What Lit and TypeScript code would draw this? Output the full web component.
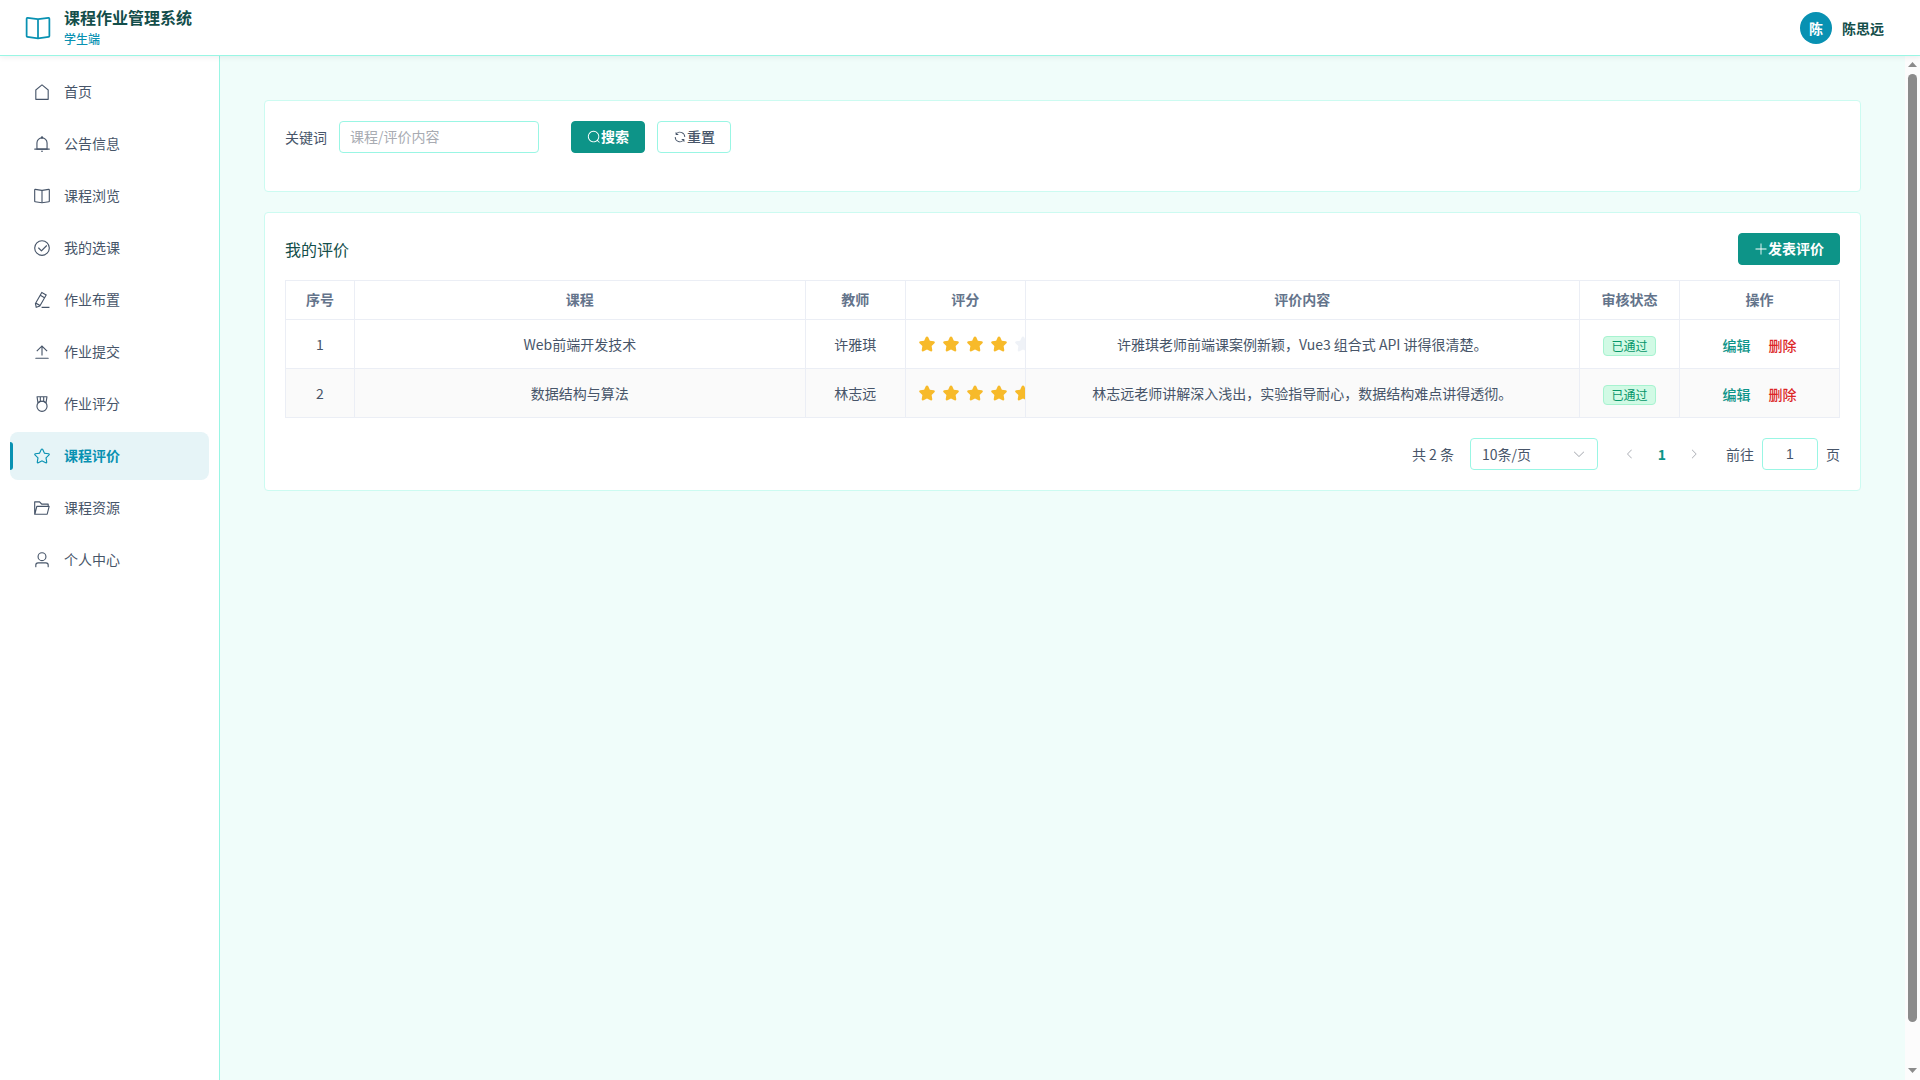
import { LitElement, html, css, svg } from "lit";
import { customElement, property, state } from "lit/decorators.js";
import { classMap } from "lit/directives/class-map.js";

const STAR_OUTLINE =
  "M313.6 924.48a70.4 70.4 0 0 1-102.144-74.24l37.888-220.928L88.96 472.96A70.4 70.4 0 0 1 128 352.896l221.76-32.256 99.2-200.96a70.4 70.4 0 0 1 126.208 0l99.2 200.96 221.824 32.256a70.4 70.4 0 0 1 39.04 120.064L774.72 629.376l37.888 220.928a70.4 70.4 0 0 1-102.144 74.24L512 820.096l-198.4 104.32z";

const ICONS: Record<string, string[]> = {
  home: [
    "M192 413.952V896h640V413.952L512 147.328zM139.52 374.4l352-293.312a32 32 0 0 1 40.96 0l352 293.312A32 32 0 0 1 896 398.976V928a32 32 0 0 1-32 32H160a32 32 0 0 1-32-32V398.976a32 32 0 0 1 11.52-24.576",
  ],
  bell: [
    "M512 64a64 64 0 0 1 64 64v64H448v-64a64 64 0 0 1 64-64",
    "M256 768h512V448a256 256 0 1 0-512 0zm256-640a320 320 0 0 1 320 320v384H192V448a320 320 0 0 1 320-320",
    "M96 768h832q32 0 32 32t-32 32H96q-32 0-32-32t32-32m352 128h128a64 64 0 0 1-128 0",
  ],
  book: [
    "m512 863.36 384-54.848v-638.72L525.568 222.72a96 96 0 0 1-27.136 0L128 169.792v638.72zM137.024 106.432l370.432 52.928a32 32 0 0 0 9.088 0l370.432-52.928A64 64 0 0 1 960 169.792v638.72a64 64 0 0 1-54.976 63.36l-388.48 55.488a32 32 0 0 1-9.088 0l-388.48-55.488A64 64 0 0 1 64 808.512v-638.72a64 64 0 0 1 73.024-63.36",
    "M480 192h64v704h-64z",
  ],
  check: [
    "M512 896a384 384 0 1 0 0-768 384 384 0 0 0 0 768m0 64a448 448 0 1 1 0-896 448 448 0 0 1 0 896",
    "M745.344 361.344a32 32 0 0 1 45.312 45.312l-288 288a32 32 0 0 1-45.312 0l-160-160a32 32 0 1 1 45.312-45.312L480 626.752z",
  ],
  pen: [
    "m199.04 672.64 193.984 112 224-387.968-193.92-112-224 388.032zm-23.872 60.16 32.896 148.288 144.896-45.696zM455.04 229.248l193.92 112 56.704-98.112-193.984-112zM104.32 708.8l384-665.024 304.768 175.936L409.152 884.8h.064l-248.448 78.336zm384 254.272v-64h448v64z",
  ],
  upload: [
    "M160 832h704a32 32 0 1 1 0 64H160a32 32 0 1 1 0-64m384-578.304V704h-64V247.296L237.248 490.048 192 444.8 508.8 128l316.8 316.8-45.312 45.248z",
  ],
  medal: [
    "M512 896a256 256 0 1 0 0-512 256 256 0 0 0 0 512m0 64a320 320 0 1 1 0-640 320 320 0 0 1 0 640",
    "M576 128H448v200a286.7 286.7 0 0 1 64-8c19.52 0 40.832 2.688 64 8zm64 0v219.648c24.448 9.088 50.56 20.416 78.4 33.92L757.44 128zm-256 0H266.624l39.04 253.568c27.84-13.504 53.888-24.832 78.336-33.92zM229.312 64h565.376a32 32 0 0 1 31.616 36.864L768 480c-113.792-64-199.104-96-256-96s-142.208 32-256 96l-58.304-379.136A32 32 0 0 1 229.312 64",
  ],
  star: [
    "m512 747.84 228.16 119.936a6.4 6.4 0 0 0 9.28-6.72l-43.52-254.08 184.512-179.904a6.4 6.4 0 0 0-3.52-10.88l-255.104-37.12L517.76 147.904a6.4 6.4 0 0 0-11.52 0L392.192 379.072l-255.104 37.12a6.4 6.4 0 0 0-3.52 10.88L318.08 606.976l-43.584 254.08a6.4 6.4 0 0 0 9.28 6.72z" +
      STAR_OUTLINE,
  ],
  starFilled: [STAR_OUTLINE],
  folder: [
    "M878.08 448H241.92l-96 384h636.16zM832 384v-64H485.76L357.504 192H128v448l57.92-231.744A32 32 0 0 1 216.96 384zm-24.96 512H96a32 32 0 0 1-32-32V160a32 32 0 0 1 32-32h287.872l128.384 128H864a32 32 0 0 1 32 32v96h23.04a32 32 0 0 1 31.04 39.744l-112 448A32 32 0 0 1 807.04 896",
  ],
  user: [
    "M512 512a192 192 0 1 0 0-384 192 192 0 0 0 0 384m0 64a256 256 0 1 1 0-512 256 256 0 0 1 0 512m320 320v-96a96 96 0 0 0-96-96H288a96 96 0 0 0-96 96v96a32 32 0 1 1-64 0v-96a160 160 0 0 1 160-160h448a160 160 0 0 1 160 160v96a32 32 0 1 1-64 0",
  ],
  search: [
    "m795.904 750.72 124.992 124.928a32 32 0 0 1-45.248 45.248L750.656 795.904a416 416 0 1 1 45.248-45.248zM480 832a352 352 0 1 0 0-704 352 352 0 0 0 0 704",
  ],
  refresh: [
    "M771.776 794.88A384 384 0 0 1 128 512h64a320 320 0 0 0 555.712 216.448H654.72a32 32 0 1 1 0-64h149.056a32 32 0 0 1 32 32v148.928a32 32 0 1 1-64 0v-50.56zM276.288 295.616h92.992a32 32 0 0 1 0 64H220.16a32 32 0 0 1-32-32V178.56a32 32 0 0 1 64 0v50.56A384 384 0 0 1 896.128 512h-64a320 320 0 0 0-555.776-216.384z",
  ],
  plus: [
    "M480 480V128a32 32 0 0 1 64 0v352h352a32 32 0 1 1 0 64H544v352a32 32 0 1 1-64 0V544H128a32 32 0 0 1 0-64z",
  ],
  down: [
    "M831.872 340.864 512 652.672 192.128 340.864a30.59 30.59 0 0 0-42.752 0 29.12 29.12 0 0 0 0 41.6L489.664 714.24a32 32 0 0 0 44.672 0l340.288-331.712a29.12 29.12 0 0 0 0-41.728 30.59 30.59 0 0 0-42.752 0z",
  ],
  left: [
    "M609.408 149.376 277.76 489.6a32 32 0 0 0 0 44.672l331.648 340.352a29.12 29.12 0 0 0 41.728 0 30.59 30.59 0 0 0 0-42.752L339.264 511.936l311.872-319.872a30.59 30.59 0 0 0 0-42.688 29.12 29.12 0 0 0-41.728 0z",
  ],
  right: [
    "M340.864 149.312a30.59 30.59 0 0 0 0 42.752L652.736 512 340.864 831.872a30.59 30.59 0 0 0 0 42.752 29.12 29.12 0 0 0 41.728 0L714.24 534.336a32 32 0 0 0 0-44.672L382.592 149.376a29.12 29.12 0 0 0-41.728 0z",
  ],
};

@customElement("ui-icon")
class UiIcon extends LitElement {
  @property() name = "";

  static styles = css`
    :host {
      display: inline-flex;
      flex: none;
      width: 1em;
      height: 1em;
    }
    .glyph {
      display: block;
      width: 100%;
      height: 100%;
      fill: currentColor;
    }
  `;

  render() {
    return html`<svg class="glyph" viewBox="0 0 1024 1024" aria-hidden="true">
      ${(ICONS[this.name] ?? []).map((d) => svg`<path d=${d}></path>`)}
    </svg>`;
  }
}

interface Review {
  course: string;
  teacher: string;
  score: number;
  content: string;
  status: string;
}

const MENU = [
  { icon: "home", label: "首页" },
  { icon: "bell", label: "公告信息" },
  { icon: "book", label: "课程浏览" },
  { icon: "check", label: "我的选课" },
  { icon: "pen", label: "作业布置" },
  { icon: "upload", label: "作业提交" },
  { icon: "medal", label: "作业评分" },
  { icon: "star", label: "课程评价" },
  { icon: "folder", label: "课程资源" },
  { icon: "user", label: "个人中心" },
];

const REVIEWS: Review[] = [
  {
    course: "Web前端开发技术",
    teacher: "许雅琪",
    score: 4,
    content: "许雅琪老师前端课案例新颖，Vue3 组合式 API 讲得很清楚。",
    status: "已通过",
  },
  {
    course: "数据结构与算法",
    teacher: "林志远",
    score: 5,
    content: "林志远老师讲解深入浅出，实验指导耐心，数据结构难点讲得透彻。",
    status: "已通过",
  },
];

@customElement("app-root")
class AppRoot extends LitElement {
  @state() private active = 7;

  static styles = css`
    :host {
      display: flex;
      flex-direction: column;
      height: 100vh;
      font-family: "Noto Sans CJK SC", "Noto Sans", sans-serif;
      font-size: 14px;
      line-height: 20px;
      color: #475569;
      background: #f0fdfa;
    }
    *,
    *::before {
      box-sizing: border-box;
    }
    button,
    input,
    select {
      margin: 0;
      font: inherit;
      color: inherit;
    }
    button {
      cursor: pointer;
    }

    .header {
      display: flex;
      align-items: center;
      justify-content: space-between;
      flex: none;
      height: 56px;
      padding: 0 36px 0 24px;
      background: #fff;
      border-bottom: 1px solid #99f6e4;
      box-shadow: 0 1px 6px rgba(15, 23, 42, 0.08);
      z-index: 1;
    }
    .brand {
      display: flex;
      align-items: center;
      gap: 12px;
    }
    .brand-icon {
      font-size: 28px;
      color: #0891b2;
    }
    .brand-text {
      display: grid;
      gap: 2px;
    }
    .brand-title {
      margin: 0;
      font-size: 16px;
      font-weight: 700;
      color: #134e4a;
    }
    .brand-role {
      font-size: 12px;
      font-weight: 500;
      color: #0891b2;
      margin: 0;
    }
    .account {
      display: flex;
      align-items: center;
      gap: 10px;
      padding: 0;
      border: 0;
      background: none;
      font-weight: 600;
      color: #134e4a;
    }
    .avatar {
      display: grid;
      place-items: center;
      width: 32px;
      height: 32px;
      border-radius: 50%;
      background: #0891b2;
      color: #fff;
    }

    .body {
      display: flex;
      flex: 1;
      min-height: 0;
    }
    .sidebar {
      flex: none;
      width: 220px;
      padding: 12px 10px;
      background: #fff;
      border-right: 1px solid #99f6e4;
      overflow: auto;
    }
    .menu {
      display: flex;
      flex-direction: column;
      gap: 4px;
      margin: 0;
      padding: 0;
      list-style: none;
    }
    .menu-link {
      position: relative;
      display: flex;
      align-items: center;
      gap: 13px;
      height: 48px;
      padding: 0 23px;
      border-radius: 8px;
      color: #475569;
      text-decoration: none;
    }
    .menu-icon {
      font-size: 18px;
    }
    .menu-label,
    .btn-label {
      padding-bottom: 2px;
    }
    .menu-link.active {
      background: #e6f4f7;
      color: #0891b2;
      font-weight: 600;
    }
    .menu-link.active::before {
      content: "";
      position: absolute;
      left: 0;
      top: 10px;
      bottom: 10px;
      width: 3px;
      border-radius: 0 3px 3px 0;
      background: #0891b2;
    }

    .main {
      flex: 1;
      min-width: 0;
      overflow-x: hidden;
      overflow-y: auto;
      scrollbar-width: none;
      padding: 44px;
    }
    .scrollbar {
      display: flex;
      flex-direction: column;
      gap: 7px;
      flex: none;
      width: 15px;
      padding: 6px 3px 7px;
      background: #fcfcfc;
    }
    .scroll-arrow {
      flex: none;
      height: 5px;
      background: #8b8b8b;
      clip-path: polygon(50% 0, 100% 100%, 0 100%);
    }
    .scroll-arrow.end {
      clip-path: polygon(0 0, 100% 0, 50% 100%);
    }
    .scroll-track {
      flex: 1;
    }
    .scroll-thumb {
      height: 96%;
      border-radius: 5px;
      background: #8b8b8b;
    }
    .page {
      display: flex;
      flex-direction: column;
      gap: 20px;
      min-height: calc(100vh - 144px);
    }
    .card {
      padding: 20px;
      background: #fff;
      border: 1px solid #ccfbf1;
      border-radius: 4px;
    }

    .filters {
      display: flex;
      gap: 32px;
      padding-bottom: 38px;
    }
    .field {
      display: flex;
      align-items: center;
      gap: 12px;
    }
    .box {
      height: 32px;
      padding: 0 11px;
      border: 1px solid #99f6e4;
      border-radius: 4px;
      background: #fff;
      outline: none;
    }
    .box::placeholder {
      color: #a8abb2;
      opacity: 1;
    }
    .keyword {
      width: 200px;
      padding: 0 10px 2px;
    }
    .buttons {
      display: flex;
      gap: 12px;
    }
    .btn {
      display: inline-flex;
      align-items: center;
      justify-content: center;
      height: 32px;
      padding: 0 15px;
      border: 1px solid #99f6e4;
      border-radius: 4px;
      background: #fff;
      font-weight: 500;
    }
    .btn.primary {
      border-color: #0d9488;
      background: #0d9488;
      color: #fff;
      font-weight: 600;
    }

    .card-head {
      display: flex;
      align-items: center;
      justify-content: space-between;
      margin-bottom: 15px;
    }
    .card-title {
      margin: 0;
      font-size: 16px;
      font-weight: 400;
      color: #134e4a;
    }

    .table {
      width: 100%;
      table-layout: fixed;
      border-collapse: separate;
      border-spacing: 0;
      border-top: 1px solid #ebeef5;
      border-left: 1px solid #ebeef5;
    }
    .col-index {
      width: 69px;
    }
    .col-course {
      width: 29%;
    }
    .col-small {
      width: 100px;
    }
    .col-score {
      width: 120px;
    }
    .col-actions {
      width: 160px;
    }
    .cell {
      height: 49px;
      padding: 0 12px;
      border-right: 1px solid #ebeef5;
      border-bottom: 1px solid #ebeef5;
      text-align: center;
      font-weight: 400;
    }
    .cell.head {
      height: 39px;
      padding-bottom: 2px;
      font-weight: 600;
      color: #64748b;
    }
    .cell.score {
      padding-right: 0;
    }
    .row:nth-child(even) {
      background: #fafafa;
    }
    .stars {
      display: flex;
      gap: 6px;
      overflow: hidden;
      font-size: 18px;
      color: #eff2f7;
    }
    .star-on {
      color: #f7ba2a;
    }
    .tag {
      display: inline-block;
      height: 20px;
      padding: 0 7px;
      border: 1px solid #a7f3d0;
      border-radius: 4px;
      background: #d1fae5;
      color: #059669;
      font-size: 12px;
      line-height: 18px;
    }
    .cell.status {
      padding-top: 2px;
    }
    .actions {
      display: flex;
      justify-content: center;
      gap: 18px;
    }
    .link {
      padding: 2px 0 0;
      border: 0;
      background: none;
      font-weight: 500;
      color: #0d9488;
    }
    .link.danger {
      color: #dc2626;
    }

    .pager {
      display: flex;
      align-items: center;
      justify-content: flex-end;
      gap: 16px;
      margin-top: 20px;
    }
    .size {
      display: grid;
      align-items: center;
      width: 128px;
    }
    .size-select,
    .size-arrow {
      grid-area: 1 / 1;
    }
    .size-select {
      appearance: none;
      width: 100%;
    }
    .size-arrow {
      justify-self: end;
      margin-right: 12px;
      color: #a8abb2;
      pointer-events: none;
    }
    .pages {
      display: flex;
    }
    .page-btn {
      display: grid;
      place-items: center;
      width: 32px;
      height: 32px;
      padding: 0;
      border: 0;
      background: none;
    }
    .page-btn:disabled {
      color: #a8abb2;
    }
    .page-arrow {
      font-size: 12px;
    }
    .page-btn.current {
      color: #0d9488;
      font-weight: 700;
    }
    .jump {
      display: flex;
      align-items: center;
      gap: 8px;
    }
    .jump-input {
      width: 56px;
      font-family: "Liberation Sans", sans-serif;
      text-align: center;
    }
  `;

  private stars(score: number) {
    return html`<div class="stars" role="img" aria-label="${score} / 5">
      ${[1, 2, 3, 4, 5].map(
        (n) =>
          html`<ui-icon name="starFilled" class=${classMap({ "star-on": n <= score })}></ui-icon>`,
      )}
    </div>`;
  }

  private onSelect(e: Event, i: number) {
    e.preventDefault();
    this.active = i;
  }

  render() {
    return html`
      <header class="header">
        <div class="brand">
          <ui-icon class="brand-icon" name="book"></ui-icon>
          <div class="brand-text">
            <h1 class="brand-title">课程作业管理系统</h1>
            <p class="brand-role">学生端</p>
          </div>
        </div>
        <button class="account" type="button">
          <span class="avatar">陈</span>
          <span>陈思远</span>
        </button>
      </header>
      <div class="body">
        <nav class="sidebar">
          <ul class="menu">
            ${MENU.map(
              (m, i) => html`<li>
                <a
                  class=${classMap({ "menu-link": true, active: i === this.active })}
                  href="#"
                  @click=${(e: Event) => this.onSelect(e, i)}
                  ><ui-icon class="menu-icon" name=${m.icon}></ui-icon
                  ><span class="menu-label">${m.label}</span></a
                >
              </li>`,
            )}
          </ul>
        </nav>
        <main class="main">
          <div class="page">
            <form class="card filters" @submit=${(e: Event) => e.preventDefault()}>
              <div class="field">
                <label for="keyword">关键词</label>
                <input class="box keyword" id="keyword" type="text" placeholder="课程/评价内容" />
              </div>
              <div class="buttons">
                <button class="btn primary" type="submit">
                  <ui-icon name="search"></ui-icon><span class="btn-label">搜索</span>
                </button>
                <button class="btn" type="reset">
                  <ui-icon name="refresh"></ui-icon><span class="btn-label">重置</span>
                </button>
              </div>
            </form>
            <section class="card">
              <div class="card-head">
                <h2 class="card-title">我的评价</h2>
                <button class="btn primary" type="button">
                  <ui-icon name="plus"></ui-icon><span class="btn-label">发表评价</span>
                </button>
              </div>
              <table class="table">
                <colgroup>
                  <col class="col-index" />
                  <col class="col-course" />
                  <col class="col-small" />
                  <col class="col-score" />
                  <col />
                  <col class="col-small" />
                  <col class="col-actions" />
                </colgroup>
                <thead>
                  <tr>
                    ${["序号", "课程", "教师", "评分", "评价内容", "审核状态", "操作"].map(
                      (t) => html`<th class="cell head" scope="col">${t}</th>`,
                    )}
                  </tr>
                </thead>
                <tbody>
                  ${REVIEWS.map(
                    (r, i) => html`<tr class="row">
                      <td class="cell">${i + 1}</td>
                      <td class="cell">${r.course}</td>
                      <td class="cell">${r.teacher}</td>
                      <td class="cell score">${this.stars(r.score)}</td>
                      <td class="cell">${r.content}</td>
                      <td class="cell status"><span class="tag">${r.status}</span></td>
                      <td class="cell">
                        <div class="actions">
                          <button class="link" type="button">编辑</button>
                          <button class="link danger" type="button">删除</button>
                        </div>
                      </td>
                    </tr>`,
                  )}
                </tbody>
              </table>
              <div class="pager">
                <span>共 ${REVIEWS.length} 条</span>
                <div class="size">
                  <select class="box size-select" aria-label="每页条数">
                    <option>10条/页</option>
                    <option>20条/页</option>
                    <option>50条/页</option>
                  </select>
                  <ui-icon class="size-arrow" name="down"></ui-icon>
                </div>
                <div class="pages">
                  <button class="page-btn" type="button" aria-label="上一页" disabled>
                    <ui-icon class="page-arrow" name="left"></ui-icon>
                  </button>
                  <button class="page-btn current" type="button">1</button>
                  <button class="page-btn" type="button" aria-label="下一页" disabled>
                    <ui-icon class="page-arrow" name="right"></ui-icon>
                  </button>
                </div>
                <div class="jump">
                  <label for="jump">前往</label>
                  <input class="box jump-input" id="jump" type="text" inputmode="numeric" .value=${"1"} />
                  <span>页</span>
                </div>
              </div>
            </section>
          </div>
        </main>
        <div class="scrollbar" aria-hidden="true">
          <div class="scroll-arrow"></div>
          <div class="scroll-track"><div class="scroll-thumb"></div></div>
          <div class="scroll-arrow end"></div>
        </div>
      </div>
    `;
  }
}
